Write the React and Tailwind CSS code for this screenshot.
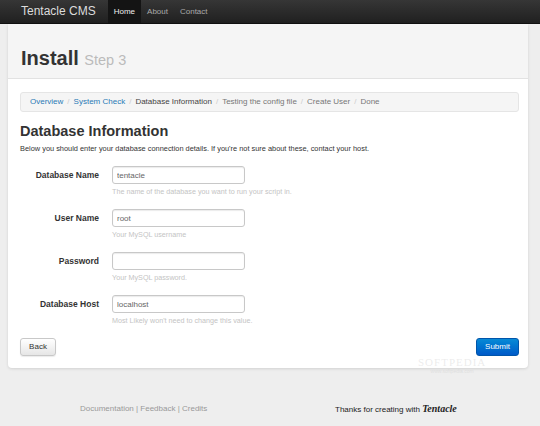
import React from "react";

const fields = [
  { label: "Database Name", value: "tentacle", help: "The name of the database you want to run your script in." },
  { label: "User Name", value: "root", help: "Your MySQL username" },
  { label: "Password", value: "", help: "Your MySQL password." },
  { label: "Database Host", value: "localhost", help: "Most Likely won't need to change this value." },
];

const crumbs = [
  { text: "Overview", tone: "link" },
  { text: "System Check", tone: "link" },
  { text: "Database Information", tone: "active" },
  { text: "Testing the config file", tone: "muted" },
  { text: "Create User", tone: "muted" },
  { text: "Done", tone: "muted", last: true },
];

const toneClass = {
  link: "text-[#2a7ab5]",
  active: "text-[#444]",
  muted: "text-[#777]",
};

const App = () => {
  return (
    <div
      className="relative w-[540px] h-[426px] overflow-hidden bg-[#eeeeee]"
      style={{ fontFamily: '"Liberation Sans", Arial, sans-serif' }}
    >
      {/* navbar */}
      <nav className="h-[24px] flex items-stretch bg-gradient-to-b from-[#363636] to-[#202020] border-b border-[#111]">
        <div className="pl-[21px] pr-[12px] text-[12px] leading-[23px] text-[#dcdcdc]">Tentacle CMS</div>
        <a className="px-[6px] text-[8px] leading-[23px] text-[#eee] bg-[#141414]">Home</a>
        <a className="px-[6px] text-[8px] leading-[23px] text-[#aaa]">About</a>
        <a className="px-[6px] text-[8px] leading-[23px] text-[#aaa]">Contact</a>
      </nav>

      {/* main card */}
      <div className="ml-[8px] w-[520px] bg-white rounded-b-[4px] shadow-[0_1px_3px_rgba(0,0,0,0.12)]">
        <div className="h-[55px] bg-[#f5f5f5] border-b border-[#e2e2e2] pl-[13px] pt-[22px]">
          <h1 className="text-[20px] leading-[24px] font-bold text-[#333]">
            Install <span className="text-[14.5px] font-normal text-[#bbb]">Step 3</span>
          </h1>
        </div>

        <div className="pl-[12px] pr-[9px] pt-[13px] pb-[12px]">
          <ul className="h-[20px] flex items-center pl-[9px] bg-[#f5f5f5] border border-[#e5e5e5] rounded-[3px] text-[8px]">
            {crumbs.map((c) => (
              <li key={c.text} className="flex items-center">
                <span className={toneClass[c.tone]}>{c.text}</span>
                {!c.last && <span className="px-[4px] text-[#ccc]">/</span>}
              </li>
            ))}
          </ul>

          <h2 className="mt-[10px] text-[14.5px] leading-[18px] font-bold text-[#333]">Database Information</h2>
          <p className="mt-[4px] text-[7.4px] leading-[10px] text-[#333]">
            Below you should enter your database connection details. If you're not sure about these, contact your host.
          </p>

          <form className="mt-[12px] flex flex-col gap-[12px]">
            {fields.map((f) => (
              <div key={f.label} className="flex">
                <label className="w-[79px] h-[18px] flex items-center justify-end text-[8.5px] font-bold text-[#333]">
                  {f.label}
                </label>
                <div className="ml-[13px] flex flex-col">
                  <input
                    defaultValue={f.value}
                    type={f.label === "Password" ? "password" : "text"}
                    className="w-[133px] h-[18px] px-[4px] text-[8px] text-[#666] bg-white border border-[#c8c8c8] rounded-[3px] shadow-[inset_0_1px_1px_rgba(0,0,0,0.08)] outline-none"
                  />
                  <span className="mt-[3px] text-[7.2px] leading-[10px] text-[#c4c4c4]">{f.help}</span>
                </div>
              </div>
            ))}
          </form>

          <div className="mt-[12px] flex justify-between">
            <button className="h-[18px] w-[36px] text-[8px] text-[#333] rounded-[3px] border border-[#c8c8c8] bg-gradient-to-b from-white to-[#e6e6e6] shadow-[0_1px_1px_rgba(0,0,0,0.08)]">
              Back
            </button>
            <button className="h-[18px] w-[43px] text-[8px] text-white rounded-[3px] border border-[#0055aa] bg-gradient-to-b from-[#0a8ad6] to-[#0059c8]">
              Submit
            </button>
          </div>
        </div>
      </div>

      {/* footer */}
      <footer className="mt-[33px] flex items-center text-[8px]">
        <div className="pl-[80px] w-[335px] text-[#999]">Documentation | Feedback | Credits</div>
        <div className="text-[#222]">
          Thanks for creating with{" "}
          <span className="text-[10px] italic font-bold" style={{ fontFamily: '"Liberation Serif", serif' }}>
            Tentacle
          </span>
        </div>
      </footer>

      {/* watermark */}
      <div className="absolute left-[418px] top-[357px] flex flex-col items-center leading-none pointer-events-none">
        <span className="text-[11px] tracking-[1px] text-[rgba(200,200,200,0.35)]" style={{ fontFamily: '"Liberation Serif", serif' }}>
          SOFTPEDIA
        </span>
        <span className="mt-[1px] text-[5px] text-[rgba(200,200,200,0.4)]">www.softpedia.com</span>
      </div>
    </div>
  );
};

export default App;
